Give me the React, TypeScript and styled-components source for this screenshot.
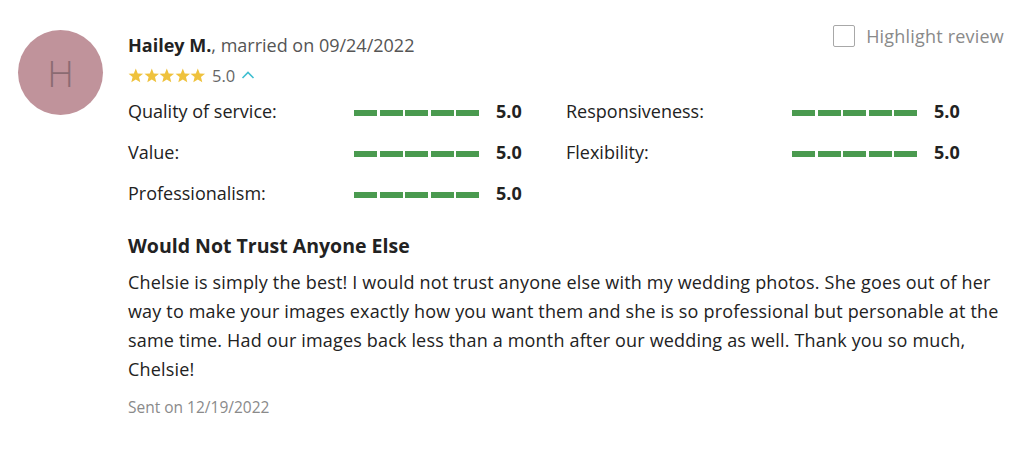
import styled, { createGlobalStyle } from 'styled-components';

const GlobalStyle = createGlobalStyle`
  body {
    margin: 0;
    background: #ffffff;
    font-family: 'Open Sans', 'Liberation Sans', sans-serif;
    color: #222222;
  }
`;

const Page = styled.div`
  display: flex;
  align-items: flex-start;
  gap: 25px;
  padding: 30px 20px 0 18px;
  width: 1023px;
  box-sizing: border-box;
`;

const Avatar = styled.div`
  flex: 0 0 85px;
  height: 85px;
  border-radius: 50%;
  background: #c0939b;
  color: #8b6b72;
  display: flex;
  align-items: center;
  justify-content: center;
  font-size: 37px;
  font-weight: 300;
`;

const Content = styled.div`
  flex: 1;
  display: flex;
  flex-direction: column;
`;

const HeaderRow = styled.div`
  display: flex;
  justify-content: space-between;
  align-items: flex-start;
  height: 30px;
`;

const Name = styled.div`
  font-size: 18px;
  line-height: 30px;
  color: #555555;

  & b {
    color: #222222;
    font-weight: 700;
  }
`;

const Highlight = styled.label`
  display: flex;
  align-items: center;
  gap: 11px;
  font-size: 18px;
  letter-spacing: 0.2px;
  line-height: 22px;
  color: #8a8a8a;
  margin-top: -5px;
`;

const Box = styled.span`
  width: 20px;
  height: 20px;
  border: 1px solid #a8a8a8;
  border-radius: 2px;
`;

const StarsRow = styled.div`
  display: flex;
  align-items: center;
  gap: 6px;
  height: 26px;
  margin-top: 2px;
  font-size: 16.5px;
  color: #666666;
`;

const Stars = styled.div`
  display: flex;
`;

const RatingGrid = styled.div`
  display: grid;
  grid-template-columns: 438px 438px;
  margin-top: 2px;
`;

const RatingRow = styled.div`
  display: flex;
  align-items: center;
  height: 41px;
`;

const RatingLabel = styled.span`
  width: 226px;
  font-size: 18px;
  color: #222222;
`;

const Bar = styled.div`
  display: flex;
  gap: 2.5px;
  margin-right: 17px;
  margin-top: 4px;
`;

const Segment = styled.span<{ $on: boolean }>`
  width: 23px;
  height: 6px;
  background: ${(p) => (p.$on ? '#4a9a4f' : '#dddddd')};
`;

const Score = styled.span`
  font-size: 18px;
  font-weight: 700;
  color: #222222;
`;

const Title = styled.h3`
  margin: 20px 0 0;
  font-size: 19.5px;
  font-weight: 700;
  line-height: 26px;
  color: #222222;
`;

const Body = styled.p`
  margin: 9px 0 0;
  font-size: 18px;
  letter-spacing: 0.17px;
  line-height: 29px;
  color: #222222;
`;

const Sent = styled.div`
  margin-top: 12px;
  font-size: 15.5px;
  color: #8a8a8a;
`;

function Star() {
  return (
    <svg width="15.6" height="15" viewBox="0 0 24 23">
      <polygon
        points="12,0.8 15,8.3 23.2,8.8 16.9,14 18.9,22 12,17.6 5.1,22 7.1,14 0.8,8.8 9,8.3"
        fill="#efc23d"
      />
    </svg>
  );
}

function ChevronUp() {
  return (
    <svg width="14" height="10" viewBox="0 0 14 10">
      <polyline points="1.5,8 7,2.5 12.5,8" fill="none" stroke="#3fbfd1" strokeWidth="1.6" />
    </svg>
  );
}

const ratings = [
  { label: 'Quality of service:', value: 5 },
  { label: 'Responsiveness:', value: 5 },
  { label: 'Value:', value: 5 },
  { label: 'Flexibility:', value: 5 },
  { label: 'Professionalism:', value: 5 },
];

export default function App() {
  return (
    <>
      <GlobalStyle />
      <Page>
        <Avatar>H</Avatar>
        <Content>
          <HeaderRow>
            <Name>
              <b>Hailey M.</b>, married on 09/24/2022
            </Name>
            <Highlight>
              <Box />
              Highlight review
            </Highlight>
          </HeaderRow>
          <StarsRow>
            <Stars>
              {[0, 1, 2, 3, 4].map((i) => (
                <Star key={i} />
              ))}
            </Stars>
            <span>5.0</span>
            <ChevronUp />
          </StarsRow>
          <RatingGrid>
            {ratings.map((r) => (
              <RatingRow key={r.label}>
                <RatingLabel>{r.label}</RatingLabel>
                <Bar>
                  {[1, 2, 3, 4, 5].map((n) => (
                    <Segment key={n} $on={n <= r.value} />
                  ))}
                </Bar>
                <Score>{r.value.toFixed(1)}</Score>
              </RatingRow>
            ))}
          </RatingGrid>
          <Title>Would Not Trust Anyone Else</Title>
          <Body>
            Chelsie is simply the best! I would not trust anyone else with my wedding photos. She goes out of her
            way to make your images exactly how you want them and she is so professional but personable at the
            same time. Had our images back less than a month after our wedding as well. Thank you so much,
            Chelsie!
          </Body>
          <Sent>Sent on 12/19/2022</Sent>
        </Content>
      </Page>
    </>
  );
}
